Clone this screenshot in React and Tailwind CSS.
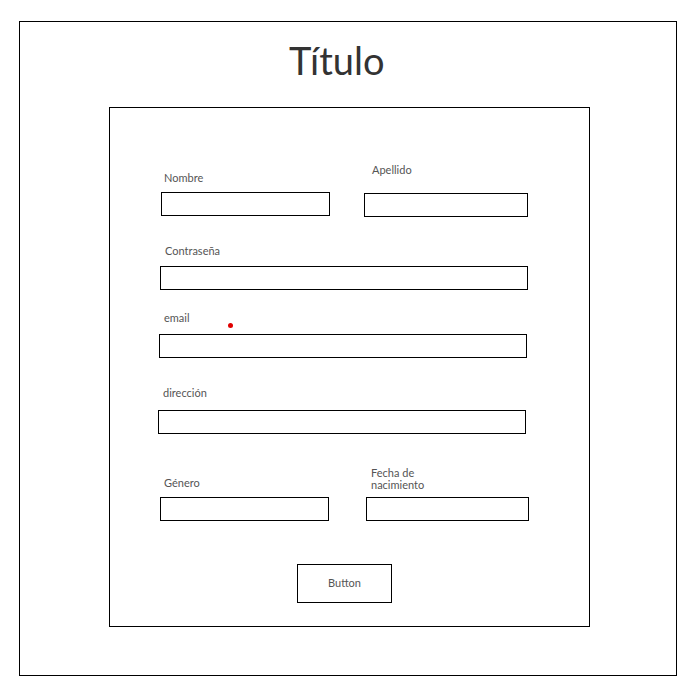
export default function App() {
  const label = "text-[11px] leading-[12px] text-[#555]";
  const input = "h-[24px] border border-black";
  return (
    <div className="w-[698px] h-[698px] bg-white pl-[19px] pt-[21px]" style={{ fontFamily: "Lato, 'Open Sans', sans-serif" }}>
      <div className="w-[658px] h-[655px] border border-black flex flex-col">
        <h1 className="mt-[19px] ml-[269px] text-[38px] leading-[38px] text-[#333] font-normal">Título</h1>
        <div className="mt-[28px] ml-[89px] w-[481px] h-[520px] border border-black flex flex-col">
          {/* Row 1 */}
          <div className="mt-[56px] flex items-start">
            <div className="ml-[51px] flex flex-col">
              <span className={`mt-[8px] ml-[3px] ${label}`}>Nombre</span>
              <div className={`mt-[8px] w-[169px] ${input}`} />
            </div>
            <div className="ml-[34px] flex flex-col">
              <span className={`ml-[8px] ${label}`}>Apellido</span>
              <div className={`mt-[17px] w-[164px] ${input}`} />
            </div>
          </div>
          {/* Contraseña */}
          <span className={`mt-[28px] ml-[55px] ${label}`}>Contraseña</span>
          <div className={`mt-[9px] ml-[50px] w-[368px] ${input}`} />
          {/* email */}
          <div className="relative mt-[22px] ml-[54px] flex">
            <span className={label}>email</span>
            <span className="absolute left-[64px] top-[11px] w-[5px] h-[5px] rounded-full bg-[#e00000]" />
          </div>
          <div className={`mt-[10px] ml-[49px] w-[368px] ${input}`} />
          {/* dirección */}
          <span className={`mt-[29px] ml-[53px] ${label}`}>dirección</span>
          <div className={`mt-[11px] ml-[48px] w-[368px] ${input}`} />
          {/* Row 5 */}
          <div className="mt-[33px] flex items-start">
            <div className="ml-[50px] flex flex-col">
              <span className={`mt-[10px] ml-[4px] ${label}`}>Género</span>
              <div className={`mt-[8px] w-[169px] ${input}`} />
            </div>
            <div className="ml-[37px] flex flex-col">
              <span className={`ml-[5px] w-[70px] ${label}`}>Fecha de nacimiento</span>
              <div className={`mt-[6px] w-[163px] ${input}`} />
            </div>
          </div>
          {/* Button */}
          <button className="mt-[43px] ml-[187px] w-[95px] h-[39px] border border-black flex items-center justify-center text-[11px] text-[#555]">
            Button
          </button>
        </div>
      </div>
    </div>
  );
}
